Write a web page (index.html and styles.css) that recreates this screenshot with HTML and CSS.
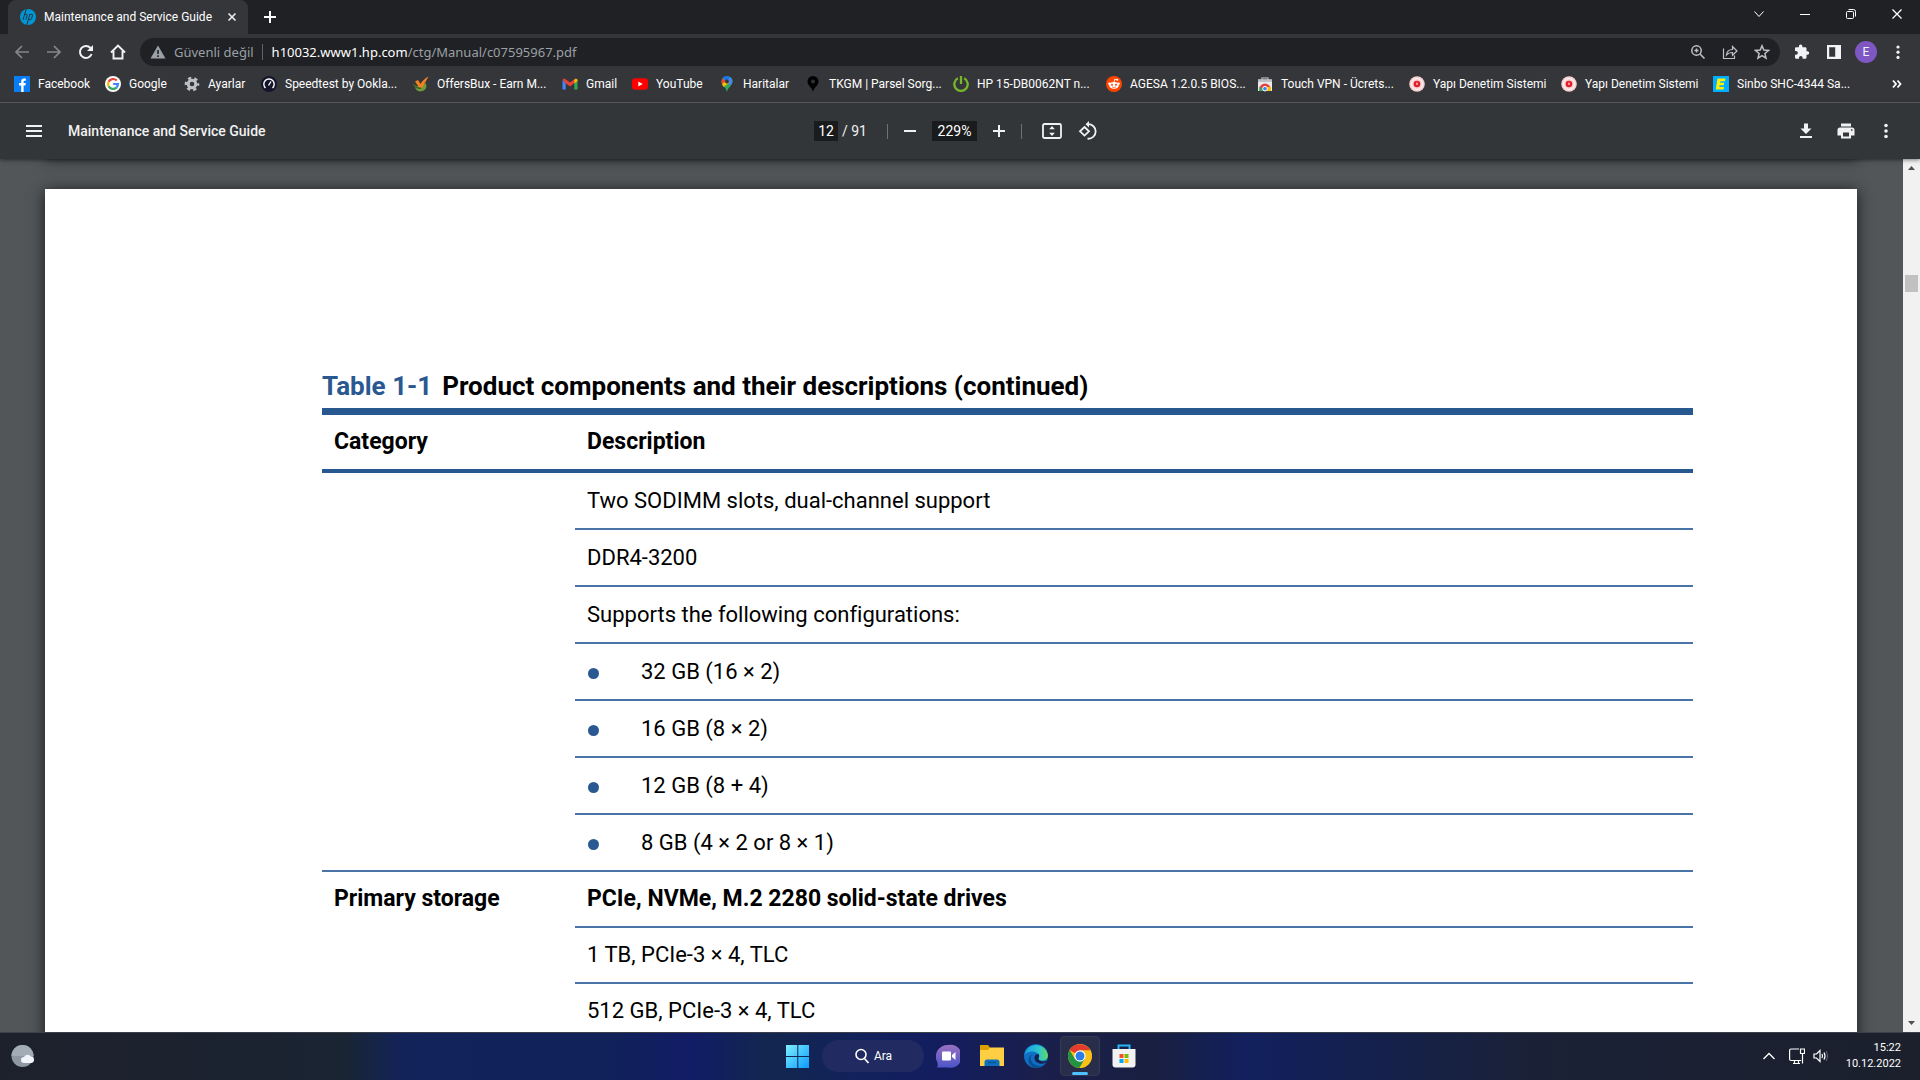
FILE: index.html
```html
<!DOCTYPE html>
<html lang="tr">
<head>
<meta charset="utf-8">
<title>Maintenance and Service Guide</title>
<link rel="stylesheet" href="styles.css">
</head>
<body>
<header class="browser">
  <div class="tab-strip">
    <div class="tab">
      <svg class="icon16" viewBox="0 0 16 16"><circle cx="8" cy="8" r="8" fill="#0096d6"/><path d="M6.300 0L3 10.800M4.700 5.400h1.800q1 0 .7 1L5.800 10.800M9.900 5.400L6.800 16M9.500 5.400h2.300q1 0 .7 1l-1 3.300q-.3 1-1.300 1H8.300" fill="none" stroke="#2b3138" stroke-width="1"/></svg>
      <span class="tab-title">Maintenance and Service Guide</span>
      <button class="tab-close" aria-label="Kapat"><svg class="icon16 line" viewBox="0 0 16 16"><path d="M4.500 4.500l7 7M11.500 4.500l-7 7" stroke-width="1.700"/></svg></button>
    </div>
    <button class="new-tab" aria-label="Yeni sekme"><svg class="icon16 line" viewBox="0 0 16 16"><path d="M8 2v12M2 8h12" stroke-width="2"/></svg></button>
    <div class="window-controls">
      <button aria-label="Sekme ara"><svg class="icon16 line" viewBox="0 0 16 16"><path d="M3.500 5.500L8 10.500l4.500-5"/></svg></button>
      <button aria-label="Simge durumuna küçült"><svg class="icon16 line" viewBox="0 0 16 16"><path d="M3 8.500h10"/></svg></button>
      <button aria-label="Önceki boyut"><svg class="icon16 line" viewBox="0 0 16 16"><rect x="3.500" y="5.500" width="7" height="7" rx="1"/><path d="M5.500 3.500h5q2 0 2 2v5"/></svg></button>
      <button aria-label="Pencereyi kapat"><svg class="icon16 line" viewBox="0 0 16 16"><path d="M3.500 3.500l9 9M12.500 3.500l-9 9" stroke-width="1.300"/></svg></button>
    </div>
  </div>

  <div class="toolbar">
    <nav class="nav-buttons">
      <button class="muted" aria-label="Geri"><svg class="icon16 line" viewBox="0 0 16 16"><path d="M15 8H2M8 2L2 8l6 6" stroke-width="1.700"/></svg></button>
      <button class="muted" aria-label="İleri"><svg class="icon16 line" viewBox="0 0 16 16"><path d="M1 8h13M8 2l6 6-6 6" stroke-width="1.700"/></svg></button>
      <button aria-label="Yenile"><svg class="icon16 line" viewBox="0 0 16 16"><path d="M13.600 10A6 6 0 1 1 12.500 4" stroke-width="2"/><path d="M15 1v6H9z" fill="currentColor" stroke="none"/></svg></button>
      <button aria-label="Ana sayfa"><svg class="icon16 line" viewBox="0 0 16 16"><path d="M1 8.500L8 1.500l7 7M3.500 7v7.500h9V7" stroke-width="1.900"/></svg></button>
    </nav>
    <div class="omnibox">
      <button class="security" aria-label="Site bilgileri"><svg class="icon16" viewBox="0 0 16 16"><path d="M8 1.500L15.500 14.500H.5z" fill="#9aa0a6"/><path d="M8 6v4M8 11.300v1.700" stroke="#202124" stroke-width="1.600"/></svg><span>Güvenli değil</span></button>
      <div class="url" role="textbox" aria-label="Adres" contenteditable="true" spellcheck="false">h10032.www1.hp.com<span class="url-path">/ctg/Manual/c07595967.pdf</span></div>
      <div class="omnibox-actions">
        <button aria-label="Yakınlaştır"><svg class="icon16 line" viewBox="0 0 16 16"><circle cx="6.500" cy="6.500" r="4.700" stroke-width="1.500"/><path d="M10 10l4.500 4.500M6.500 4.500v4M4.500 6.500h4" stroke-width="1.500"/></svg></button>
        <button aria-label="Paylaş"><svg class="icon16 line" viewBox="0 0 16 16"><path d="M1.500 4.500v10h11v-3M4.500 11q.5-5.500 6-5.500V2.500L15 7l-4.500 4.300V8.500Q6.500 8.500 4.500 11z" stroke-width="1.200"/></svg></button>
        <button aria-label="Yer işareti ekle"><svg class="icon16 line" viewBox="0 0 16 16"><path d="M8 1.800l1.800 4.300 4.700.4-3.600 3 1.100 4.600L8 11.700l-4 2.400 1.100-4.600-3.600-3 4.700-.4z" stroke-width="1.500"/></svg></button>
      </div>
    </div>
    <div class="nav-buttons">
      <button aria-label="Uzantılar"><svg class="icon16" viewBox="0 0 16 16"><path d="M13.500 7.300h-1V4.500Q12.500 3.200 11.200 3.200H8.400V2.200a1.700 1.700 0 0 0-3.500 0v1H2.200Q1 3.200 1 4.500V7h1a1.800 1.800 0 0 1 0 3.700H1v2.800Q1 14.700 2.200 14.700H5v-1a1.800 1.800 0 0 1 3.600 0v1h2.600q1.300 0 1.300-1.300v-2.700h1a1.700 1.700 0 0 0 0-3.400z" fill="currentColor"/></svg></button>
      <button aria-label="Yan panel"><svg class="icon16" viewBox="0 0 16 16"><path d="M1 1h14v14H1zM3.200 3.200v9.600h6V3.200z" fill="currentColor" fill-rule="evenodd"/></svg></button>
      <button aria-label="Profil"><span class="avatar">E</span></button>
      <button aria-label="Menü"><svg class="icon16" viewBox="0 0 16 16" fill="currentColor"><circle cx="8" cy="3" r="1.600"/><circle cx="8" cy="8.200" r="1.600"/><circle cx="8" cy="13.400" r="1.600"/></svg></button>
    </div>
  </div>

  <nav class="bookmarks">
    <a href="#"><svg class="icon16" viewBox="0 0 16 16"><path fill="#0a7cf4" d="M0 0h16v16H0z"/><path d="M7.200 16V9.500H5V7h2.200V5.300Q7.200 2.500 10 2.500h1.800v2.300h-1.200q-1 0-1 1V7h2.200l-.4 2.500H9.600V16z" fill="#fff"/></svg><span>Facebook</span></a>
    <a href="#"><svg class="icon16" viewBox="0 0 16 16"><circle cx="8" cy="8" r="8" fill="#fff"/><g fill="none" stroke-width="2.200"><path d="M11.700 4.600A5 5 0 0 0 3.600 5.700" stroke="#ea4335"/><path d="M3.600 5.700a5 5 0 0 0 0 4.600" stroke="#fbbc05"/><path d="M3.600 10.300a5 5 0 0 0 7.800 1.300" stroke="#34a853"/><path d="M11.400 11.600Q13 10 13 8H8.200" stroke="#4285f4"/></g></svg><span>Google</span></a>
    <a href="#"><svg class="icon16" viewBox="0 0 16 16"><circle cx="8" cy="8" r="3.800" fill="none" stroke="#bdc1c6" stroke-width="3"/><circle cx="8" cy="8" r="6" fill="none" stroke="#bdc1c6" stroke-width="2.600" stroke-dasharray="3.140 3.140" stroke-dashoffset="1.500"/></svg><span>Ayarlar</span></a>
    <a href="#"><svg class="icon16" viewBox="0 0 16 16"><circle cx="8" cy="8" r="8" fill="#15162b"/><path d="M4.500 12A5.200 5.200 0 1 1 11.500 12M7.500 9.500L10 5.500" fill="none" stroke="#fff" stroke-width="1.400"/></svg><span>Speedtest by Ookla...</span></a>
    <a href="#"><svg class="icon16" viewBox="0 0 16 16"><path d="M1 9q5 3 12-2 2 8-6 8.500Q3 15.500 1 9z" fill="#6c9a3c"/><path d="M2 5.500L5 4l2.500 4Q10 3.500 15.500 .5 12.500 6 9 12H6.500z" fill="#f58220"/><path d="M0 8q3 5 8 4" fill="none" stroke="#3f5f30" stroke-width="1.500"/></svg><span>OffersBux - Earn M...</span></a>
    <a href="#"><svg class="icon16" viewBox="0 0 16 16"><path d="M.500 4v9.500h3.200V7z" fill="#4285f4"/><path d="M15.500 4v9.500h-3.200V7z" fill="#34a853"/><path d="M.500 3.500L2.500 2.400 8 6.500l5.500-4.100L12.300 7 8 10.500 3.700 7.300z" fill="#ea4335"/><path d="M12.300 4l1.500-1.500 1.700 1V5l-3.200 2.500z" fill="#fbbc04"/></svg><span>Gmail</span></a>
    <a href="#"><svg class="icon16" viewBox="0 0 16 16"><rect y="2.200" width="16" height="11.600" rx="3" fill="#f00"/><path d="M6.300 5.500v5L10.700 8z" fill="#fff"/></svg><span>YouTube</span></a>
    <a href="#"><svg class="icon16" viewBox="0 0 16 16"><path d="M8 0a5.500 5.500 0 0 0-5.500 5.500C2.500 9.500 7 11 8 16c1-5 5.500-6.500 5.500-10.500A5.500 5.500 0 0 0 8 0z" fill="#34a853"/><path d="M4 1.900L11 10l2.200-3.300Q14 3.500 12 1.800z" fill="#4285f4"/><path d="M3.500 2.400L7 5 3.200 8.500Q1.600 5 3.500 2.400z" fill="#ea4335"/><path d="M3 8L9 3.500l1.500 3-6 4.500z" fill="#fbbc04"/><path d="M3.700 2A5.400 5.400 0 0 1 11 .9L8 5z" fill="#1a73e8"/><circle cx="8" cy="5.500" r="2" fill="#35363a"/></svg><span>Haritalar</span></a>
    <a href="#"><svg class="icon16" viewBox="0 0 16 16"><path d="M8 0a5.500 5.500 0 0 0-5.500 5.500C2.500 9.500 7 11 8 16c1-5 5.500-6.500 5.500-10.500A5.500 5.500 0 0 0 8 0z" fill="#000"/><circle cx="8" cy="5.500" r="2" fill="#303135"/></svg><span>TKGM | Parsel Sorg...</span></a>
    <a href="#"><svg class="icon16" viewBox="0 0 16 16"><path d="M4.800 2.300a6.700 6.700 0 1 0 6.400 0M8 0v8" fill="none" stroke="#76b82a" stroke-width="2.300"/></svg><span>HP 15-DB0062NT n...</span></a>
    <a href="#"><svg class="icon16" viewBox="0 0 16 16"><circle cx="8" cy="8" r="8" fill="#ff4500"/><ellipse cx="8" cy="9.300" rx="4.700" ry="3.400" fill="#fff"/><circle cx="3.400" cy="7.800" r="1.200" fill="#fff"/><circle cx="12.600" cy="7.800" r="1.200" fill="#fff"/><path d="M8 6.500l.7-3.300 2.500.5" fill="none" stroke="#fff" stroke-width=".9"/><circle cx="11.200" cy="3.700" r="1" fill="#fff"/><circle cx="6" cy="8.700" r="1" fill="#ff4500"/><circle cx="10" cy="8.700" r="1" fill="#ff4500"/><path d="M6 10.900q2 1.200 4 0" fill="none" stroke="#ff4500" stroke-width=".7"/></svg><span>AGESA 1.2.0.5 BIOS...</span></a>
    <a href="#"><svg class="icon16" viewBox="0 0 16 16"><path d="M5 4V2h6v2" fill="none" stroke="#9aa0a6" stroke-width="1.500"/><path d="M1 3.500h14V15H1z" fill="#e8eaed"/><path d="M1 3.500h14V6H1z" fill="#bdc1c6"/><path d="M2.500 13a5.500 5.500 0 0 1 11 0z" fill="#ea4335"/><path d="M2.500 10.500L8 15H2z" fill="#34a853"/><path d="M10 11h4v4H8z" fill="#fbbc04"/><circle cx="8" cy="12.700" r="2.300" fill="#4285f4" stroke="#fff"/></svg><span>Touch VPN - Ücrets...</span></a>
    <a href="#"><svg class="icon16" viewBox="0 0 16 16"><circle cx="8" cy="8" r="7.800" fill="#f6cfd1"/><circle cx="8" cy="8" r="5.500" fill="none" stroke="#fff"/><circle cx="8" cy="8" r="3.300" fill="#e11f2b"/><path d="M8 6.500V9" stroke="#fff"/></svg><span>Yapı Denetim Sistemi</span></a>
    <a href="#"><svg class="icon16" viewBox="0 0 16 16"><circle cx="8" cy="8" r="7.800" fill="#f6cfd1"/><circle cx="8" cy="8" r="5.500" fill="none" stroke="#fff"/><circle cx="8" cy="8" r="3.300" fill="#e11f2b"/><path d="M8 6.500V9" stroke="#fff"/></svg><span>Yapı Denetim Sistemi</span></a>
    <a href="#"><svg class="icon16" viewBox="0 0 16 16"><path fill="#00aeff" d="M0 0h16v16H0z"/><path d="M4.500 2.500h8l-.5 2.700H7.300L7 6.700h4.200l-.5 2.500H6.600l-.3 1.700H11l-.4 2.600H2.800z" fill="#fff200"/></svg><span>Sinbo SHC-4344 Sa...</span></a>
    <button class="overflow" aria-label="Diğer yer işaretleri"><svg class="icon16 line" viewBox="0 0 16 16"><path d="M4 4.500L7 8l-3 3.500M8.500 4.500l3 3.500-3 3.500" stroke-width="1.800"/></svg></button>
  </nav>
</header>

<div class="pdf-toolbar">
  <div class="pdf-left">
    <button aria-label="Kenar çubuğu"><svg class="icon20" viewBox="0 0 20 20"><path d="M2 4h16v2H2zM2 9h16v2H2zM2 14h16v2H2z" fill="currentColor"/></svg></button>
    <h1>Maintenance and Service Guide</h1>
  </div>
  <div class="pdf-center">
    <input class="page-number" type="text" value="12" aria-label="Sayfa">
    <span class="page-count">/ 91</span>
    <span class="separator"></span>
    <button aria-label="Uzaklaştır"><svg class="icon20" viewBox="0 0 20 20"><path d="M4 9h12v2H4z" fill="currentColor"/></svg></button>
    <input class="zoom-level" type="text" value="229%" aria-label="Yakınlaştırma düzeyi">
    <button aria-label="Yakınlaştır"><svg class="icon20" viewBox="0 0 20 20"><path d="M4 9h5V4h2v5h5v2h-5v5H9v-5H4z" fill="currentColor"/></svg></button>
    <span class="separator"></span>
    <div class="view-buttons">
      <button aria-label="Sayfaya sığdır"><svg class="icon20" viewBox="0 0 20 20"><rect x="1" y="3" width="18" height="14" rx="1.500" fill="none" stroke="currentColor" stroke-width="1.800"/><path d="M10 5l2.800 3.300H7.200zM10 15l2.800-3.300H7.200z" fill="currentColor"/></svg></button>
      <button aria-label="Döndür"><svg class="icon20" viewBox="0 0 20 20"><path d="M6.500 6L11 10.300 6.500 14.600 2 10.300zM9.500 3.200A7.300 7.300 0 1 1 9.500 17.700" fill="none" stroke="currentColor" stroke-width="1.800"/><path d="M11 0v6.500L7.500 3.200z" fill="currentColor"/></svg></button>
    </div>
  </div>
  <div class="pdf-right">
    <button aria-label="İndir"><svg class="icon20" viewBox="0 0 20 20"><path d="M8 2.500h4v5h3.500L10 13 4.500 7.500H8zM4 15h12v2H4z" fill="currentColor"/></svg></button>
    <button aria-label="Yazdır"><svg class="icon20" viewBox="0 0 20 20"><path d="M5 2.500h10v3H5zM4 6.500h12q2.500 0 2.500 2.500v5.500H15v3H5v-3H1.500V9Q1.500 6.500 4 6.500zM7 11.500v4h6v-4zM15 8.300v1.500h1.500V8.300z" fill="currentColor" fill-rule="evenodd"/></svg></button>
    <button aria-label="Diğer işlemler"><svg class="icon20" viewBox="0 0 20 20" fill="currentColor"><circle cx="10" cy="4.500" r="1.800"/><circle cx="10" cy="10" r="1.800"/><circle cx="10" cy="15.500" r="1.800"/></svg></button>
  </div>
</div>

<main class="viewer">
  <div class="pages">
    <div class="sheet sheet-previous"></div>
    <article class="sheet sheet-current">
      <table class="components">
        <caption><span class="table-label">Table 1-1</span>Product components and their descriptions (continued)</caption>
        <thead>
          <tr><th scope="col" class="category">Category</th><th scope="col">Description</th></tr>
        </thead>
        <tbody>
          <tr><td rowspan="7"></td><td>Two SODIMM slots, dual-channel support</td></tr>
          <tr><td>DDR4-3200</td></tr>
          <tr><td>Supports the following configurations:</td></tr>
          <tr><td class="bullet">32 GB (16 × 2)</td></tr>
          <tr><td class="bullet">16 GB (8 × 2)</td></tr>
          <tr><td class="bullet">12 GB (8 + 4)</td></tr>
          <tr><td class="bullet">8 GB (4 × 2 or 8 × 1)</td></tr>
        </tbody>
        <tbody class="storage">
          <tr><th scope="rowgroup" rowspan="3">Primary storage</th><th>PCIe, NVMe, M.2 2280 solid-state drives</th></tr>
          <tr><td>1 TB, PCIe-3 × 4, TLC</td></tr>
          <tr><td>512 GB, PCIe-3 × 4, TLC</td></tr>
        </tbody>
      </table>
    </article>
  </div>
  <div class="scrollbar">
    <svg class="arrow" viewBox="0 0 17 17"><path d="M5 11h7L8.500 7z" fill="#505050"/></svg>
    <div class="track"><div class="thumb"></div></div>
    <svg class="arrow" viewBox="0 0 17 17"><path d="M5 6h7l-3.500 4z" fill="#505050"/></svg>
  </div>
</main>

<footer class="taskbar">
  <div class="widgets">
    <button aria-label="Hava durumu"><svg class="icon24" viewBox="0 0 24 24"><circle cx="11.500" cy="12" r="11" fill="#8f97a3"/><path d="M.500 12a11 11 0 0 1 22 0z" fill="#a3abb5"/><path d="M13 19a3 3 0 0 1 0-6 4 4 0 0 1 7-.5 3.300 3.300 0 0 1 .5 6.500z" fill="#f1f4f8"/></svg></button>
  </div>
  <div class="apps">
    <button aria-label="Başlat"><svg class="icon24" viewBox="0 0 24 24"><defs><linearGradient id="win" x1="0" y1="0" x2="1" y2="1"><stop stop-color="#7ff0ff"/><stop offset="1" stop-color="#0a9bff"/></linearGradient></defs><path d="M0 1h11.300v11H0zM12.300 1H23v11H12.300zM0 13h11.300v11H0zM12.300 13H23v11H12.300z" fill="url(#win)"/></svg></button>
    <button class="search"><svg class="icon16 line" viewBox="0 0 16 16"><circle cx="7" cy="6.500" r="5" stroke-width="1.600"/><path d="M10.500 10.500l4 4.500" stroke-width="1.800"/></svg><span>Ara</span></button>
    <button aria-label="Sohbet"><svg class="icon24" viewBox="0 0 24 24"><defs><linearGradient id="chat" x1="0" y1="0" x2="0" y2="1"><stop stop-color="#9a70c0"/><stop offset="1" stop-color="#4a55c8"/></linearGradient></defs><path d="M12 1a11.500 11.500 0 1 1 0 22.500H1q1.500-2.500 0-6A11.500 11.500 0 0 1 12 1z" fill="url(#chat)"/><rect x="6" y="7.500" width="9" height="9" rx="1" fill="#fff"/><path d="M16 11l3.500-3v8L16 13z" fill="#fff"/></svg></button>
    <button aria-label="Dosya Gezgini"><svg class="icon24" viewBox="0 0 24 24"><path d="M0 1h8l2 2.500V8H0z" fill="#e09f00"/><path d="M0 6h8l2-2.500h14V22H0z" fill="#ffcf43"/><path d="M4.500 22v-4q0-2.500 2.500-2.500h10q2.500 0 2.500 2.500v4z" fill="#0f70c0"/><path d="M8 18.500h8" stroke="#0b5694" stroke-width="1.500"/></svg></button>
    <button aria-label="Edge"><svg class="icon24" viewBox="0 0 24 24"><defs><linearGradient id="edge" x1="0" y1="0" x2="1" y2="0"><stop stop-color="#1a9de0"/><stop offset=".6" stop-color="#2bc3d2"/><stop offset="1" stop-color="#62d95a"/></linearGradient></defs><circle cx="12" cy="12" r="12" fill="#0f6fc4"/><path d="M.300 11A12 12 0 0 1 24 11q0 5-5 5.500-5 .3-4.500-2 1.500-2 0-4.500Q12 7 7.500 7.500 2 8 .3 11z" fill="url(#edge)"/><path d="M8 10q-3 5 1 9.500 4 3.500 11 2Q15 26 8.500 23 3 19 5 13.500 6 11 8 10z" fill="#0a4f92"/><path d="M14.500 10q-4 0-4 4 0 4 5 5.500 4 1 7-1.500l.5-1.500q-3 1.500-6 .5-3-1-2.500-3 1.500-2 0-4z" fill="#151f50"/></svg></button>
    <button class="active" aria-label="Chrome"><svg class="icon24" viewBox="0 0 24 24"><circle cx="12" cy="12" r="12" fill="#fbc116"/><path d="M12 12L1.600 6A12 12 0 0 1 22.400 6.500H12z" fill="#e33b2e"/><path d="M1.600 6A12 12 0 0 0 11.500 24L17 15 12 12 7 15z" fill="#229342"/><path d="M12 6.500h10.400A12 12 0 0 1 11.500 24L17 14.500z" fill="#fbc116"/><circle cx="12" cy="12" r="5.700" fill="#fff"/><circle cx="12" cy="12" r="4.500" fill="#2d7de9"/></svg></button>
    <button aria-label="Microsoft Store"><svg class="icon24" viewBox="0 0 24 24"><path d="M6.500 5V1.500h11V5" fill="none" stroke="#29b6f6" stroke-width="2"/><path d="M.500 5h23v15.500q0 3-3 3h-17q-3 0-3-3z" fill="#f2f2f2"/><path d="M7.500 10h4v4h-4z" fill="#f25022"/><path d="M12.500 10h4v4h-4z" fill="#7fba00"/><path d="M7.500 15h4v4h-4z" fill="#00a4ef"/><path d="M12.500 15h4v4h-4z" fill="#ffb900"/></svg></button>
  </div>
  <div class="tray">
    <button aria-label="Gizli simgeler"><svg class="icon16 line" viewBox="0 0 16 16"><path d="M2.500 11L8 5.500 13.500 11" stroke-width="1.300"/></svg></button>
    <button class="status" aria-label="Ağ ve ses"><svg class="icon16 line" viewBox="0 0 16 16"><path d="M10 1H2Q.600 1 .600 2.500v8.500q0 1.500 1.500 1.500h10M4 15.500h7M5.500 12.500v3M9.500 12.500v3M11.500 1h4v4.500h-4zM13.500 5.500v10" stroke-width="1.200"/></svg><svg class="icon16 line" viewBox="0 0 16 16"><path d="M1 6h2.500L7 2.500v11L3.500 10H1zM9 6q1 2 0 4M11 4.500q2 3.500 0 7" stroke-width="1.200"/><path d="M13.200 3q3 5 0 10" stroke="#666a78"/></svg></button>
    <button class="clock"><time>15:22</time><time>10.12.2022</time></button>
  </div>
</footer>
</body>
</html>
```
FILE: styles.css
```css
* { box-sizing: border-box; }

html, body { height: 100%; }

body {
  margin: 0;
  display: flex;
  flex-direction: column;
  overflow: hidden;
  font: 12px/16px Roboto, "Open Sans", sans-serif;
  color: #fff;
  background: #525659;
}

button {
  padding: 0;
  border: 0;
  background: none;
  color: inherit;
  font: inherit;
  display: flex;
  align-items: center;
  justify-content: center;
}

a { color: inherit; text-decoration: none; }

svg { display: block; flex: none; }
.icon16 { width: 16px; height: 16px; }
.icon20 { width: 20px; height: 20px; }
.icon24 { width: 24px; height: 24px; }
.line { fill: none; stroke: currentColor; }

/* Browser frame */
.browser {
  flex: none;
  background: #35363a;
  border-bottom: 1px solid #5f6368;
}

.tab-strip {
  display: flex;
  height: 34px;
  padding-left: 8px;
  background: #202124;
}

.tab {
  display: flex;
  align-items: center;
  gap: 8px;
  width: 240px;
  padding: 0 8px 0 12px;
  background: #35363a;
  border-radius: 8px 8px 0 0;
}

.tab-title { flex: 1; white-space: nowrap; }
.tab-close { width: 16px; height: 16px; color: #e8eaed; }
.new-tab { width: 28px; margin-left: 8px; }

.window-controls { display: flex; margin-left: auto; }
.window-controls button { width: 46px; height: 28px; }

.toolbar {
  display: flex;
  align-items: center;
  gap: 6px;
  height: 36px;
  padding: 0 6px;
}

.nav-buttons { display: flex; color: #f1f3f4; }
.nav-buttons button { width: 32px; height: 28px; }
.nav-buttons .muted { color: #85878b; }

.omnibox {
  flex: 1;
  display: flex;
  align-items: center;
  height: 28px;
  padding: 0 10px;
  border-radius: 14px;
  background: #202124;
  font: 13px/20px "Noto Sans", sans-serif;
}

.security {
  gap: 8px;
  height: 16px;
  padding-right: 8px;
  border-right: 1px solid #5f6368;
  color: #9aa0a6;
}

.url { flex: 1; padding-left: 9px; white-space: nowrap; outline: 0; }
.url-path { color: #9aa0a6; }

.omnibox-actions { display: flex; color: #bdc1c6; margin-right: -8px; }
.omnibox-actions button { width: 32px; height: 28px; }

.avatar {
  width: 22px;
  height: 22px;
  border-radius: 50%;
  background: #7e57c2;
  line-height: 22px;
  text-align: center;
}

.bookmarks {
  display: grid;
  grid-template-columns: 91px 79px 77px 152px 149px 70px 87px 86px 148px 153px 151px 152px 152px 152px 152px 1fr;
  align-items: center;
  height: 32px;
  padding: 0 15px 4px 14px;
}

.bookmarks a { display: flex; align-items: center; gap: 8px; white-space: nowrap; }
.overflow { justify-self: end; }

/* PDF toolbar */
.pdf-toolbar {
  flex: none;
  z-index: 1;
  display: grid;
  grid-template-columns: 1fr auto 1fr;
  align-items: center;
  height: 56px;
  background: #323639;
  box-shadow: 0 1px 4px rgba(0, 0, 0, .5);
  color: #f1f1f1;
  font-size: 14px;
}

.pdf-left { display: flex; align-items: center; gap: 16px; padding-left: 16px; }
.pdf-left button { width: 36px; height: 36px; }
.pdf-left h1 { margin: 0; font-size: 14px; font-weight: 500; }

.pdf-center { display: flex; align-items: center; gap: 8px; }
.pdf-center button { width: 28px; height: 32px; }
.pdf-center .view-buttons { display: flex; margin-left: 4px; }
.pdf-center .view-buttons button { width: 36px; }

.page-number, .zoom-level {
  height: 20px;
  padding: 0;
  border: 0;
  background: #191b1c;
  color: #fff;
  font: inherit;
  text-align: center;
}

.page-number { width: 24px; }
.zoom-level { width: 45px; }
.page-count { margin-left: -4px; margin-right: 12px; }
.separator { width: 1px; height: 15px; background: #6f7274; }

.pdf-right { display: flex; justify-content: flex-end; padding-right: 14px; }
.pdf-right button { width: 40px; height: 36px; }

/* Document */
.viewer { flex: 1; min-height: 0; display: flex; }

.pages { flex: 1; overflow: hidden; padding: 0 46px 0 45px; }

.sheet { background: #fff; box-shadow: 0 2px 14px rgba(0, 0, 0, .7); }
.sheet-previous { height: 40px; margin-top: -43px; }
.sheet-current { margin-top: 33px; padding: 181px 164px 0 277px; min-height: 1200px; }

.components {
  width: 100%;
  border-collapse: separate;
  border-spacing: 0;
  color: #000;
  font-size: 22px;
  line-height: 28px;
}

.components caption {
  padding-bottom: 6px;
  font-size: 26px;
  font-weight: 700;
  line-height: 32px;
  text-align: left;
}

.table-label { margin-right: 10px; color: #2a5891; }

.components th, .components td {
  height: 57px;
  padding: 0 12px;
  border-bottom: 2px solid #4a74a8;
  text-align: left;
  vertical-align: middle;
}

.components th { font-size: 23px; font-weight: 700; }
.components .storage th, .components .storage td { height: 56px; }
.components th[rowspan] { padding-top: 13px; vertical-align: top; }

.components thead th {
  height: 65px;
  border-top: 7px solid #285890;
  border-bottom: 4px solid #285890;
}

.components .category { width: 253px; }

.components .bullet::before {
  content: "";
  display: inline-block;
  width: 11px;
  height: 11px;
  margin: 0 42px 0 1px;
  border-radius: 50%;
  background: #2a5891;
}

.scrollbar { width: 17px; display: flex; flex-direction: column; background: #f1f1f1; }
.arrow { width: 17px; height: 17px; }
.track { flex: 1; padding-top: 99px; }
.thumb { width: 13px; height: 17px; margin: 0 auto; background: #c1c1c1; }

/* Taskbar */
.taskbar {
  flex: none;
  z-index: 1;
  display: grid;
  grid-template-columns: 1fr auto 1fr;
  align-items: center;
  height: 48px;
  padding-bottom: 2px;
  border-top: 1px solid #3b404b;
  background: linear-gradient(90deg, #1d212c 0, #1b2330 14%, #1a2534 18%, #12235a 21%, #11215a 32%, #111c66 36%, #12274f 40%, #12205e 46%, #131d5e 49%, #1a1f4c 54%, #191f40 60%, #12205e 65%, #132050 70%, #1a2136 80%, #1b202c 100%);
}

.widgets { padding-left: 11px; }

.apps { display: flex; align-items: center; gap: 4px; padding-left: 2px; }
.apps button { width: 40px; height: 40px; }

.apps .search {
  width: 102px;
  height: 32px;
  gap: 4px;
  border-radius: 16px;
  background: #212b62;
}

.apps .active {
  position: relative;
  border: 1px solid #343953;
  border-radius: 4px;
  background: #282d4a;
}

.active::after {
  content: "";
  position: absolute;
  bottom: 0;
  left: 50%;
  width: 16px;
  height: 3px;
  margin-left: -8px;
  border-radius: 2px;
  background: #4cc2ff;
}

.tray { display: flex; align-items: center; justify-content: flex-end; gap: 12px; padding-right: 19px; }
.status { gap: 8px; }

.clock {
  flex-direction: column;
  align-items: flex-end;
  width: 60px;
  font-size: 11px;
}
```
